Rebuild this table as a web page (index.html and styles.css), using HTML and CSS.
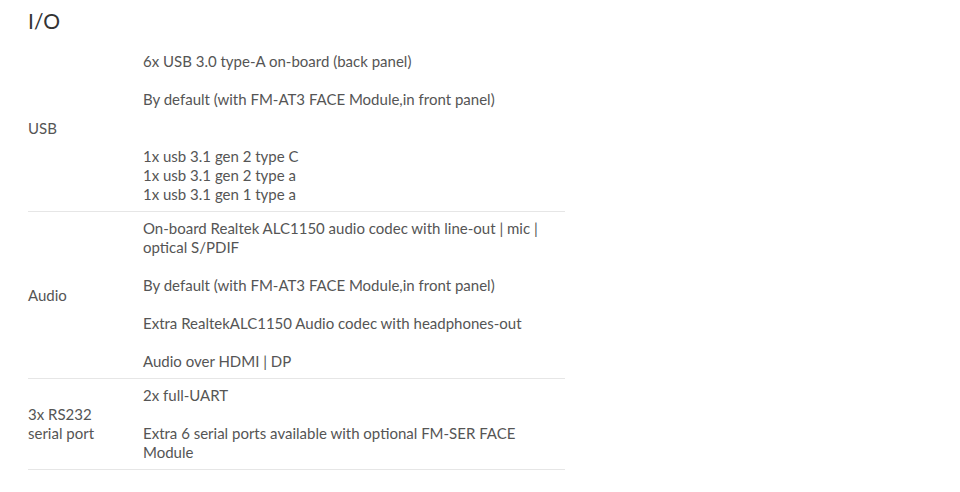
FILE: index.html
```html
<!DOCTYPE html>
<html lang="en">
<head>
<meta charset="utf-8">
<title>I/O</title>
<link rel="stylesheet" href="styles.css">
</head>
<body>
<section class="spec">
  <h2 class="spec-title">I/O</h2>
  <table class="spec-table">
    <tbody>
      <tr>
        <th class="spec-label">USB</th>
        <td class="spec-value">
          <p>6x USB 3.0 type-A on-board (back panel)</p>
          <p>By default (with FM-AT3 FACE Module,in front panel)</p>
          <p class="gap-lg">1x usb 3.1 gen 2 type C<br>1x usb 3.1 gen 2 type a<br>1x usb 3.1 gen 1 type a</p>
        </td>
      </tr>
      <tr>
        <th class="spec-label">Audio</th>
        <td class="spec-value">
          <p>On-board Realtek ALC1150 audio codec with line-out | mic | optical S/PDIF</p>
          <p>By default (with FM-AT3 FACE Module,in front panel)</p>
          <p>Extra RealtekALC1150 Audio codec with headphones-out</p>
          <p>Audio over HDMI | DP</p>
        </td>
      </tr>
      <tr>
        <th class="spec-label">3x RS232<br>serial port</th>
        <td class="spec-value">
          <p>2x full-UART</p>
          <p>Extra 6 serial ports available with optional FM-SER FACE Module</p>
        </td>
      </tr>
    </tbody>
  </table>
</section>
</body>
</html>
```
FILE: styles.css
```css
html, body {
  margin: 0;
  padding: 0;
  background: #ffffff;
}

body {
  font-family: Lato, "Open Sans", "Liberation Sans", sans-serif;
  font-size: 15px;
  line-height: 19px;
  color: #555555;
}

.spec {
  padding: 9px 28px 0;
}

.spec-title {
  margin: 0 0 12px;
  font-size: 21px;
  line-height: 24px;
  font-weight: 400;
  color: #333333;
}

.spec-table {
  width: 537px;
  border-collapse: collapse;
}

.spec-table tr {
  border-bottom: 1px solid #e6e6e6;
}

.spec-label {
  width: 115px;
  padding: 7px 0 7px;
  text-align: left;
  font-weight: 400;
  vertical-align: middle;
}

.spec-value {
  padding: 7px 10px 7px 0;
  vertical-align: top;
}

.spec-value p {
  margin: 0;
}

.spec-value p + p {
  margin-top: 19px;
}

.spec-value p.gap-lg {
  margin-top: 38px;
}
```
